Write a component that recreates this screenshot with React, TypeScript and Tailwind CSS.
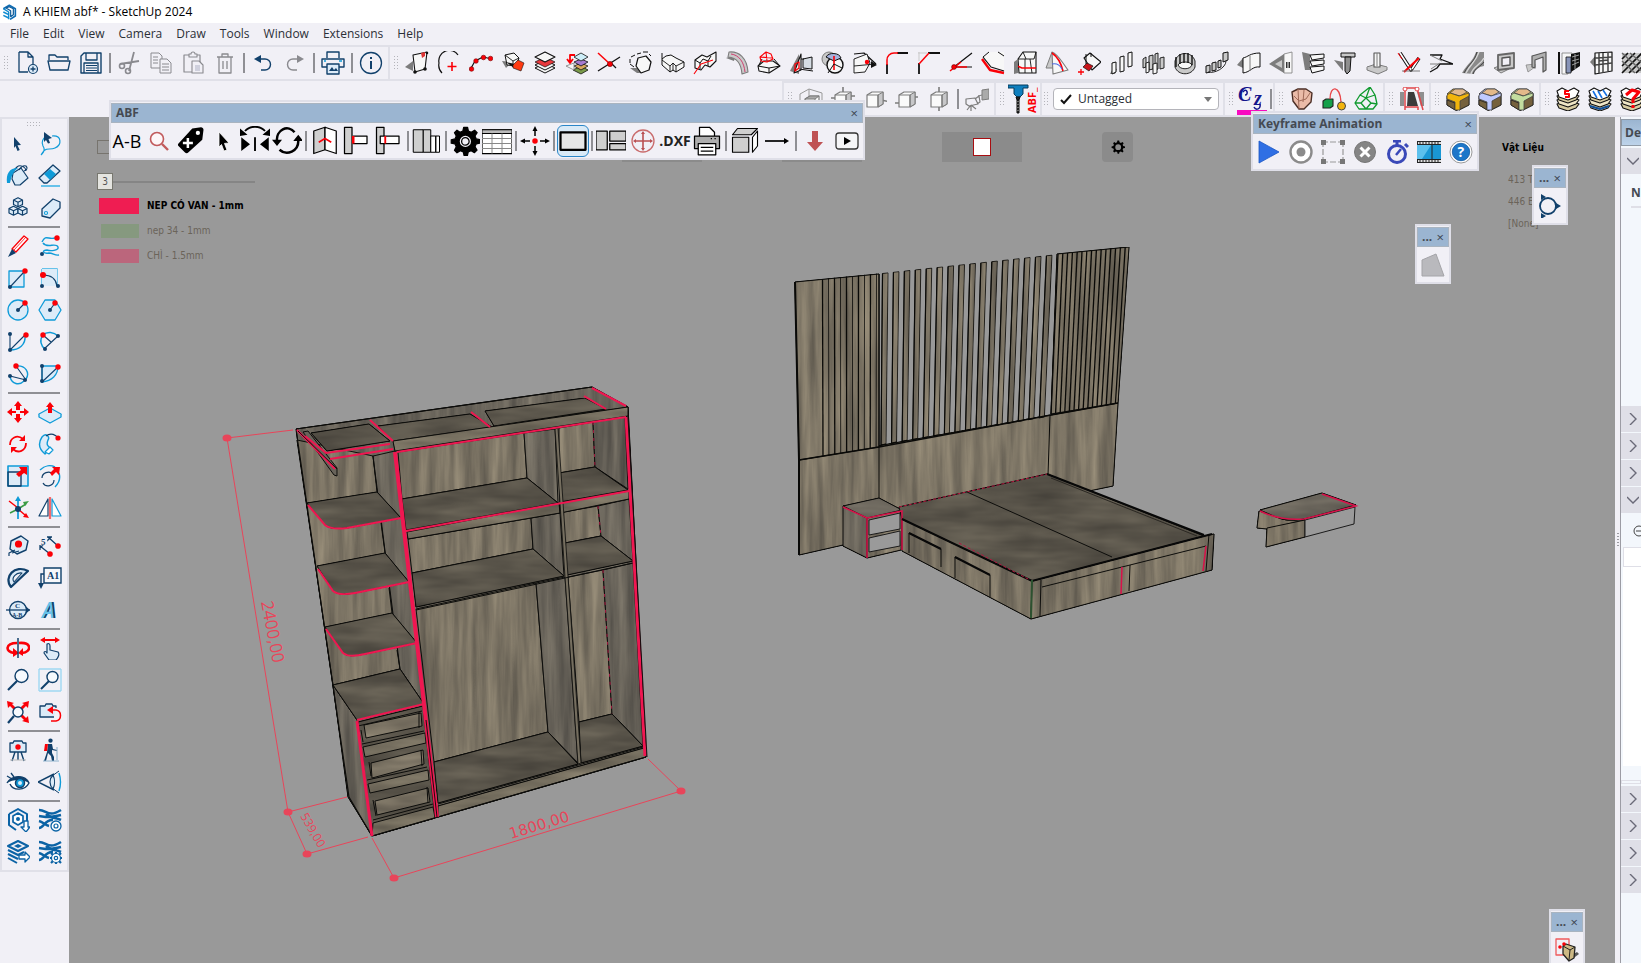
import React from 'react';
import clsx from 'clsx';

type Shape = [d: string, fill?: string, stroke?: string, width?: number];

interface Tool {
  name: string;
  shapes?: Shape[];
  node?: React.ReactNode;
  active?: boolean;
}

type Item = Tool | 'sep';

const NAVY = '#11406b';
const BLUE = '#0f9bd8';
const PALE = '#dcebf8';
const RED = '#fb0007';
const GREY = '#8a8a8f';
const BLK = '#111111';
const LITE = '#f7f7f7';
const MID = '#c9c9c9';
const DARK = '#7c7c7c';

const dot = (x: number, y: number, r: number) =>
  `M${x - r} ${y}a${r} ${r} 0 1 0 ${r * 2} 0a${r} ${r} 0 1 0 ${-r * 2} 0Z`;

const cube = (x: number, y: number, s: number) =>
  `M${x} ${y}l${s} ${-s / 2}l${s} ${s / 2}v${s}l${-s} ${s / 2}l${-s} ${-s / 2}ZM${x} ${y}l${s} ${s / 2}l${s} ${-s / 2}M${x + s} ${y + s / 2}v${s}`;

function Glyph({ shapes, size = 24 }: { shapes: Shape[]; size?: number }) {
  return (
    <svg viewBox="0 0 24 24" width={size} height={size} fill="none" aria-hidden="true" className="shrink-0">
      {shapes.map(([d, fill = 'none', stroke = 'none', width = 1], i) => (
        <path key={i} d={d} fill={fill} stroke={stroke} strokeWidth={width} strokeLinejoin="round" />
      ))}
    </svg>
  );
}

function ToolButton({ tool }: { tool: Tool }) {
  return (
    <button
      type="button"
      aria-label={tool.name}
      title={tool.name}
      className={clsx(
        'flex h-8 w-8 shrink-0 items-center justify-center rounded-md border',
        tool.active ? 'border-[#2a86c8] bg-[#d9eaf7]' : 'border-transparent',
      )}
    >
      {tool.node ?? <Glyph shapes={tool.shapes ?? []} />}
    </button>
  );
}

function Grip({ vertical = true }: { vertical?: boolean }) {
  return (
    <span
      className={clsx(
        'shrink-0 bg-[radial-gradient(circle,#b4b4ba_1px,transparent_1px)] bg-[length:3px_3px]',
        vertical ? 'h-4 w-1.5' : 'h-1.5 w-4',
      )}
    />
  );
}

function ToolRow({ items }: { items: Item[] }) {
  return (
    <>
      {items.map((item, i) =>
        item === 'sep' ? (
          <span key={i} className="mx-0.5 h-5 w-0.5 shrink-0 bg-[#8f8f94]" />
        ) : (
          <ToolButton key={i} tool={item} />
        ),
      )}
    </>
  );
}

function Group({ items, className }: { items: Item[]; className?: string }) {
  return (
    <div className={clsx('flex h-full shrink-0 items-center border-2 border-l-0 border-[#e0e0e8]', className)}>
      <span className="flex w-[11px] shrink-0 justify-center"><Grip /></span>
      <ToolRow items={items} />
    </div>
  );
}

/* ---------- standard toolbar ---------- */

const fileTools: Item[] = [
  { name: 'New', shapes: [['M4 1h9l5 5v7M4 1v20h9M13 1v5h5', 'none', NAVY, 1.3], [dot(18, 18, 4.5), PALE, NAVY, 1.2], ['M18 15.5v5M15.500 18h5', 'none', NAVY, 1.3]] },
  { name: 'Open', shapes: [['M2 9V4h6l2 2h11v3', 'none', NAVY, 1.3], ['M1 10h22l-2 9H3Z', 'none', NAVY, 1.3]] },
  { name: 'Save', shapes: [['M2 5l3-3h17v20H2Z', 'none', NAVY, 1.4], ['M7 2v7h11V2M5 22V12h14v10', 'none', NAVY, 1.3], ['M7 14.500h11M7 17h11M7 19.500h11', 'none', NAVY, 1.1]] },
  'sep',
  { name: 'Cut', shapes: [['M3 13l19-3M12 20L17 1M10 12l4 0', 'none', GREY, 1.8], [dot(5, 15, 2.5), 'none', GREY, 1.6], [dot(11, 20, 2.5), 'none', GREY, 1.6]] },
  { name: 'Copy', shapes: [['M2 2h8l3 3v12H2ZM4 6h5M4 9h5M4 12h5', 'none', GREY, 1], ['M11 8h7l4 4v10H11ZM13 13h7M13 16h7M13 19h7', '#f1f0f6', GREY, 1]] },
  { name: 'Paste', shapes: [['M3 4h16v17H3Z', 'none', GREY, 1.2], ['M8 5V3h2a2 2 0 0 1 4 0h2v3H8Z', '#f1f0f6', GREY, 1.1], ['M11 10h7l4 4v8H11Z', '#f1f0f6', GREY, 1.1], ['M14 14h5v6h-5Z', '#cfd0dd']] },
  { name: 'Delete', shapes: [['M4 6h16M9 6V3h6v3M6 6v16h12V6M10 10v8M14 10v8', 'none', GREY, 1.3]] },
  'sep',
  { name: 'Undo', shapes: [['M6 8h8a5.500 5.500 0 0 1 0 11h-4', 'none', NAVY, 1.4], ['M3 8l7-4v8Z', NAVY]] },
  { name: 'Redo', shapes: [['M18 8h-8a5.500 5.500 0 0 0 0 11h4', 'none', GREY, 1.4], ['M21 8l-7-4v8Z', GREY]] },
  'sep',
  { name: 'Print', shapes: [['M6 7V1h12v6M6 16H1V8h22v8h-5', 'none', NAVY, 1.4], ['M6 13h12v10H6Z', PALE, NAVY, 1.4], ['M8 20l3-4 2 3 2-2 2 3Z', NAVY], ['M18 10h3M3 10h2', 'none', BLUE, 1.5]] },
  'sep',
  { name: 'Model info', shapes: [[dot(12, 12, 10.5), 'none', NAVY, 1.3], ['M11 10h2v8h-2ZM11 6h2v2h-2Z', NAVY]] },
];

/* ---------- extension toolbar ---------- */

const extTools: Item[] = [
  { name: 'Extrude face', shapes: [['M0 16l8-6v10Z', DARK], ['M8 4l14-3-2 17-10 3Z', LITE, BLK, 1.1], ['M16 2l4-1v4l-3 2Z', '#d33'], [dot(10, 21, 1.8), BLK], [dot(20, 18, 1.8), BLK], [dot(22, 2, 1.3), BLK]] },
  { name: 'Arc centre', shapes: [['M5 22A11 11 0 0 1 2 12A10.500 10.500 0 0 1 21 4', 'none', BLK, 1.2], ['M15 11v9M10.500 15.500h9', 'none', RED, 1.6]] },
  { name: 'Polyline', shapes: [['M1 19L6 10l8-4 9 2', 'none', BLK, 1.2], [dot(2.5, 18, 2.3), RED, '#700', 0.6], [dot(7, 10, 2.3), RED, '#700', 0.6], [dot(14.5, 6.5, 2.3), RED, '#700', 0.6], [dot(21.5, 7.5, 2.3), RED, '#700', 0.6]] },
  { name: 'Unfold', shapes: [['M1 10l10 1-6 6Z', DARK], ['M4 4l9-2 5 5-3 8-9-1Z', LITE, BLK, 1], ['M4 4l8 6 6-3M12 10v5', 'none', BLK, 0.9], ['M5 11l9 2-1 4Z', BLK], ['M12 14l5-5 6 3-3 8-8-3Z', '#ff3a12', BLK, 0.6]] },
  { name: 'Layers', shapes: [['M2 17l10 5 10-5-10-5Z', LITE, BLK, 1], ['M2 14l10 5 10-5-10-5Z', LITE, BLK, 1], ['M2 11l10 5 10-5-10-5Z', '#e8383c', BLK, 0.7], ['M2 6l10 5 10-5-10-5Z', LITE, BLK, 1.1]] },
  { name: 'Layer swap', shapes: [['M8 19l8 4 7-4-7-4Z', '#7a9a4a', BLK, 0.8], ['M9 15l7 4 7-4-7-3Z', '#d9a85e', BLK, 0.8], ['M9 11l7 4 7-4-7-3Z', '#a57ad0', BLK, 0.8], ['M9 6l7 4 7-4-7-4Z', '#cdeef8', BLK, 0.8], ['M1 15l8-3v7Z', LITE, DARK, 0.8], ['M10 4H5v7M2 8l3 4 3-4', 'none', RED, 1.8]] },
  { name: 'Intersect', shapes: [['M1 20L23 6', 'none', BLK, 1.3], ['M14 12l5 5', 'none', BLK, 1.2], ['M1 2l12 11', 'none', RED, 1.5], [dot(13, 13, 2.6), RED, '#600', 0.6]] },
  { name: 'Offset solid', shapes: [['M1 17h12v5H8Z', DARK], ['M9 7l8-2 5 6-2 8-8 3-5-7Z', LITE, BLK, 1.2], ['M1 12V8M2 6l4-2M8 3l4-1M14 1l5 0M20 3l2 2M1 13l4 3', 'none', BLK, 1]] },
  { name: 'Extrude shape', shapes: [['M1 2v12l8 7 3-2 3 2 8-5v-5l-8-4-5-3-5 1L1 8', LITE, BLK, 1], ['M1 9l8 6 3-3 3 3 8-4M9 15v6M15 15v6M12 12v7', 'none', BLK, 0.9]] },
  { name: 'Follow path', shapes: [['M2 17V9l7-5 5 2 9-5v9l-6 6-5-2-4 5Z', LITE, BLK, 1.1], ['M2 9l5 3 3-4 5 2 3-5M7 12v6M15 10v5', 'none', BLK, 1], ['M1 23L8 13l12-4', 'none', RED, 1.1]] },
  { name: 'Pipe', shapes: [['M1 7l8 3 1-6Z', DARK], ['M4 1c10-1 18 6 19 20l-6 2C16 12 12 7 3 6Z', MID, DARK, 1.1], ['M6 3c8 1 13 8 14 18', 'none', '#d04070', 1]] },
  { name: 'Dome', shapes: [['M1 15l6-5 9 0 7 5-11 7-10-2Z', LITE, BLK, 1.1], ['M1 15l11 2 11-2M12 17v5M5 8l-3 6M17 8l5 6', 'none', BLK, 1], ['M3 6l6-5 5 2 2 5-6 3-6-1ZM9 1l1 9M3 6l12 1', 'none', RED, 1.1]] },
  { name: 'Project', shapes: [['M1 20L10 3v20Z', DARK], ['M5 22L12 3v16Z', LITE, BLK, 1.1], ['M6 13l4-2v6l-4 3Z', 'none', RED, 1.3], ['M14 8l9-2v12l-9-1Z', '#d5dce3', BLK, 1], ['M12 8h3M10 18l14 2', 'none', BLK, 1]] },
  { name: 'Loop cut', shapes: [[dot(8, 8, 7), MID, DARK, 1], [dot(14, 14, 8), LITE, BLK, 1.4], ['M5 6a8 6 0 0 1 15 1l-7 3Z', '#a7b3dd', BLK, 1], ['M13 5v14', 'none', RED, 1.6], ['M7 22l6-9 8 4', 'none', BLK, 1]] },
  { name: 'Snap to point', shapes: [['M1 3l10-1 12 11', 'none', BLK, 1.2], ['M1 8l13-5 3 9-5 9-11 1Z', LITE, BLK, 0.9], ['M1 15l21-2', 'none', BLK, 0.9], ['M18 10l6 4-6 3Z', BLK], [dot(14, 11, 2.2), RED]] },
  { name: 'Fillet', shapes: [['M12 2h11M2 13v10', 'none', BLK, 1.8], ['M2 14V9c0-4 3-7 7-7h4', 'none', RED, 1.5]] },
  { name: 'Chamfer', shapes: [['M11 2h12M2 12v11', 'none', BLK, 1.8], ['M2 13L12 2', 'none', RED, 1.5], ['M1 2h9M2 1v9', 'none', MID, 1]] },
  { name: 'Angle', shapes: [['M23 2L5 16h18', 'none', BLK, 1.2], ['M12 11l-11 9M6 16h12', 'none', RED, 1.5], [dot(5, 16, 2.4), RED, '#600', 0.6]] },
  { name: 'Bevel', shapes: [['M2 6L8 1h15v19l-13-4Z', LITE], ['M8 1L2 6M17 1l6 4', 'none', BLK, 1], ['M1 8l8 11 14 3', 'none', RED, 2.4], ['M2 6l8 10 13 4', 'none', BLK, 1.2]] },
  { name: 'Cage', shapes: [['M5 8l5-7h13v21H6Z', LITE, BLK, 1.1], ['M5 8h16l2-7M12 8v14M17 8l2 14M10 1l3 7', 'none', BLK, 0.9], ['M2 14l7 3h14', 'none', RED, 1.5], ['M1 11l4-3v14l-4 1Z', DARK]] },
  { name: 'Curviloft', shapes: [['M1 17L7 1l6 16Z', MID, DARK, 1], ['M7 1c6 2 9 9 16 18l-15 4Z', LITE, DARK, 1.1], ['M7 2c6 4 9 10 11 18', 'none', RED, 1.6], ['M7 13c5-1 8 1 10 5', 'none', '#4d6ae0', 1.2]] },
  { name: 'Drop face', shapes: [['M7 7l6-5 11 9-9 8Z', LITE, BLK, 1.1], ['M6 16l4-4 6 3-4 5Z', '#c8141a', BLK, 0.7], ['M9 3v10M14 2v4', 'none', BLK, 1], ['M1 21h6M4 18v6', 'none', RED, 1.3]] },
  { name: 'Steps copy', shapes: [['M1 23l3-6 4 1-2 5Z', DARK], ['M3 12l4-1v10l-4 2ZM11 6l4-1v15l-4 1ZM19 2l4-1v14l-4 1Z', LITE, BLK, 1]] },
  { name: 'Array grid', shapes: [['M2 8l3-2v10l-3 1ZM8 5l4-1v14l-4 1ZM14 3l3-1v16l-3 1ZM19 7l4-1v11l-4 1Z', MID, BLK, 0.9], ['M5 12l3-1v10l-3 1ZM12 13l4-1v10l-4 1Z', LITE, BLK, 0.9]] },
  { name: 'Array ring', shapes: [['M2 10c3-10 17-10 20 0v6c-3 9-17 9-20 0Z', MID, BLK, 0.9], ['M5 14c2-4 12-4 14 0-2 5-12 5-14 0Z', LITE, BLK, 0.9], ['M3 6v10M7 3v10M11 2v10M15 2v10M19 4v10', 'none', BLK, 1.4]] },
  { name: 'Array path', shapes: [['M1 15l4-1v7l-4 1ZM7 12l4-1v8l-4 1ZM13 10l3-1v7l-3 1ZM18 2l5-1v8l-5 2Z', MID, BLK, 1], ['M3 21c6 2 18-4 18-11', 'none', BLK, 0.9]] },
  { name: 'Bend sheet', shapes: [['M0 14l6-7v10Z', DARK], ['M6 7c5-1 7-5 17-5v14c-8-1-9 5-17 6Z', LITE, BLK, 1], ['M13 5v15', 'none', DARK, 1]] },
  { name: 'Window cut', shapes: [['M0 13L15 3v19Z', DARK], ['M6 13l7-4v8Z', MID], ['M15 3l8-2v21l-8 0Z', LITE, DARK, 0.8], ['M17 11h4v6h-4Z', '#333'], ['M19 11v6', 'none', LITE, 1]] },
  { name: 'Louvre', shapes: [['M1 1l8 2v16l-5 0Z', DARK], ['M9 4l14-1v4l-12 2ZM9 10l14-1v4l-12 2ZM9 16l14-1v4l-12 3Z', LITE, BLK, 1]] },
  { name: 'Bolt', shapes: [['M1 9l9 2v9Z', DARK], ['M8 2h14v4H8Z', MID, BLK, 1], ['M12 6h6l-1 14-3 3-2-3Z', '#8f8f8f', BLK, 1]] },
  { name: 'Column', shapes: [['M2 16l9-3 11 3-9 6Z', MID, DARK, 1], ['M2 16v3l11 4 9-4v-3', MID, DARK, 1], ['M9 2h6v14l-6 0Z', LITE, '#555', 1.1], ['M12 2v13', 'none', DARK, 1]] },
  { name: 'Pivot', shapes: [['M3 2l11 17L22 7', 'none', BLK, 3.6], ['M3 2l11 17M22 7l-7 11', 'none', '#fff', 1.6], ['M22 7L7 21', 'none', RED, 2], ['M5 20h18', 'none', DARK, 1], ['M1 2l4 6', 'none', RED, 1]] },
  { name: 'Stair edge', shapes: [['M1 4h12l-2 4 13 5h-13l-3 4-7 4', 'none', BLK, 1.3], ['M1 4l12 6M1 13h9M11 12L2 18', 'none', DARK, 1]] },
  { name: 'Road', shapes: [['M1 22C7 12 12 10 15 1h8v14c-6 1-9 4-10 8Z', '#8a8a8a'], ['M5 22C10 12 14 12 18 1M10 23c2-8 9-8 13-16', 'none', '#d6d6d6', 1.4], ['M3 22C8 12 13 12 16 1M12 23c2-6 7-7 11-12', 'none', '#333', 0.8]] },
  { name: 'Frame', shapes: [['M1 17l5-2 10 3-8 4Z', MID, DARK, 1], ['M5 4l16-2v15l-16 2Z', MID, '#666', 1.8], ['M9 7l8-1v8l-8 1Z', '#f1f0f6', '#555', 1.4]] },
  { name: 'Table frame', shapes: [['M1 14l9-1v3l-7 5Z', MID, DARK, 0.7], ['M7 16V5l14-4v18l-3 2V6l-8 3v8Z', '#b0b0b0', '#555', 1.2]] },
  { name: 'Door', shapes: [['M1 1h2v22H1Z', BLK], ['M5 2h10v5h-4v16H5Z', LITE, DARK, 0.8], ['M9 6h5v16H9Z', '#8995b8', BLK, 0.8], ['M14 3l9-2v14l-9 6Z', BLK], ['M15 6l7-2M15 10l7-2M15 14l7-3M18 3v15', 'none', '#aaa', 0.9]] },
  { name: 'Grille', shapes: [['M1 11l7-8v16Z', DARK], ['M6 2l17-1v19l-17 3Z', LITE, BLK, 1.2], ['M10 2v20M14 2v20M19 2v18M6 7l17-1M6 14l17-2M10 10l9-1', 'none', '#444', 1.5]] },
  { name: 'Decking', shapes: [['M1 2h22v20H1Z', MID], ['M1 8l6-6M1 15L14 2M1 22L21 2M8 22l15-15M15 22l8-8', 'none', BLK, 1.6], ['M1 2l22 20M9 2l14 12M1 10l13 12', 'none', '#666', 1.4]] },
];

/* ---------- views, tags and model extensions ---------- */

const box = (extra: string): Shape[] => [
  [extra, 'none', DARK, 1.6],
  ['M4 8l5-3h11v12l-5 3H4Z', '#fafafa', DARK, 1.2],
  ['M15 8l5-3v12l-5 3Z', '#c7c7c9', DARK, 1],
  ['M4 8h11v12', 'none', DARK, 1.2],
];

const viewTools: Item[] = [
  { name: 'Iso', shapes: [['M1 7l9-5 13 4v14M1 7v14M10 2v8', 'none', '#999', 1], ['M6 12l5-3h9v12H6Z', '#fafafa', DARK, 1.2], ['M6 12l5-3h9l-4 3Z', '#aaa', DARK, 1], ['M16 12v10', 'none', DARK, 1]] },
  { name: 'Top', shapes: box('M12 0v6M0 11h5M19 9h5') },
  { name: 'Front', shapes: box('M18 13l7 1.500') },
  { name: 'Right', shapes: box('M0 16h4M20 10h3') },
  { name: 'Back', shapes: box('M12 0v24') },
  'sep',
  { name: 'Camera', shapes: [['M1 12l9-1 3 6-9 2-3-2ZM10 12l4-3 1 6-3 2M6 18v6M6 18l-4 5M6 18l5 4', 'none', DARK, 1.2], ['M17 3l7-1v10l-7 1Z', '#aaa', DARK, 1], ['M13 9l4-1', 'none', DARK, 1]] },
];

const abfLauncher: Item[] = [
  {
    name: 'ABF tools',
    node: (
      <svg viewBox="0 0 30 32" className="h-8 w-[30px] shrink-0" aria-hidden="true">
        <path d="M0 2h20v3h-5v6l-3 3H9l-3-3V5H0Z" fill="#0f7fbe" stroke="#073d5d" />
        <path d="M8 14h4l-1 3H9ZM9 17h2v13H9Z" fill="#222" stroke="#111" />
        <path d="M8 19l4-1M8 22l4-1M8 25l4-1M8 28l4-1" stroke="#777" />
        <text transform="translate(28 30) rotate(-90)" fill={RED} fontSize="11" fontWeight="700" fontFamily="Open Sans, sans-serif">ABF_</text>
      </svg>
    ),
  },
];

const czTools: Item[] = [
  {
    name: 'Curviz',
    node: (
      <svg viewBox="0 0 32 32" className="h-8 w-8 shrink-0" aria-hidden="true">
        <text x="2" y="18" fill="#14148c" fontSize="20" fontStyle="italic" fontWeight="700" fontFamily="Liberation Serif, serif">C</text>
        <text x="18" y="22" fill="#14148c" fontSize="20" fontStyle="italic" fontWeight="700" fontFamily="Liberation Serif, serif">z</text>
        <path d="M7 9c4-5 6 3 2 3M18 24c2 4 7 2 6-3" fill="none" stroke="#14148c" strokeWidth="1.500" />
        <path d="M1 27h30v5H1Z" fill="#f80bc0" />
      </svg>
    ),
  },
  'sep',
];

const shapeTools: Item[] = [
  { name: 'Soap skin', shapes: [['M2 5l6-3 8 0 6 4-1 9-7 7-5 0-6-8Z', '#eabba8', '#4a2d24', 1.4], ['M8 2l1 20M14 3l-1 12M4 9l5 5 7-2 4-6', 'none', '#a06a58', 1]] },
  { name: 'Joint push', shapes: [['M1 14l3-2h7v7l-3 2H1Z', '#15a04a', '#222', 1.1], ['M8 12C8-2 18-2 19 15', 'none', '#e8474a', 1.3], [dot(19.5, 19, 4), '#f3b40c', '#444', 1]] },
  { name: 'Subdivide', shapes: [['M1 16L6 8 16 0l5 8 2 9-4 5-14 0ZM6 8l6 3 9-3M12 11l-5 5-6 0M7 16l5 6 5-6 6 1M17 16l-5-5 4-11', 'none', '#0f9a2e', 1.3]] },
];

const fredoTools: Item[] = [
  { name: 'Fredo scale', shapes: [['M0 5h24v14H0Z', '#8f8f8f'], ['M4 5h13l4 15H4Z', '#f1f0f6'], ['M8 5h6l4 14H7Z', '#3a3a3a'], ['M5 1h12M5 1v22M17 1l6 22M5 23v-3h13v3', 'none', '#e0454a', 1.5], [dot(5, 2, 2), '#fff', '#e0454a', 1], [dot(17, 2, 2), '#fff', '#e0454a', 1]] },
];

const roundCorner = (edge: string): Shape[] => [
  ['M1 9l10 5v10L1 18Z', '#6f5b38', '#222', 1],
  ['M1 7l6-5 10 0 6 4v12l-10 5V14Z', edge, '#444', 1],
  ['M4 6l5-4h8l4 3-7 4Z', '#e3b98a', '#444', 0.8],
  ['M13 13l10-6v11l-10 5Z', '#75613d', '#222', 0.8],
  ['M1 13l8 3v7l-8-5Z', '#75613d', '#222', 0.8],
  ['M1 8l3-2 9 3 10-3v3l-9 5v9l-5 0v-8L1 12Z', edge, '#444', 0.8],
];

const cornerTools: Item[] = [
  { name: 'Round corner', shapes: roundCorner('#f2b50c') },
  { name: 'Sharp corner', shapes: roundCorner('#bfcaff') },
  { name: 'Bevel corner', shapes: roundCorner('#c3dd9f') },
];

const stack = (tint: string): Shape[] => [
  ['M1 17l5-2 6 3 6-3 5 2-3 4-8 3-9-3Z', '#d7cba0', '#111', 1.1],
  ['M1 13l5-2 6 3 6-3 5 2-3 4-8 3-9-3Z', '#efe6c6', '#111', 1.1],
  ['M1 9l5-2 6 3 6-3 5 2-3 4-8 3-9-3Z', '#d7cba0', '#111', 1.1],
  ['M1 4l5-3 6 3 6-3 5 3-3 6-8 3-9-3Z', tint, '#111', 1.1],
];

const stackTools: Item[] = [
  { name: 'Sandbox stack', shapes: [...stack('#ffffff'), ['M13 4H9v3h4v3H9', 'none', RED, 2]] },
  { name: 'Sandbox blue', shapes: [...stack('#ffffff'), ['M5 4l4 7M10 4l4 7M15 3l4 6', 'none', '#1670e0', 1.6], ['M2 19l10 3 9-3', 'none', '#0f4f9a', 2]] },
  { name: 'Sandbox red', shapes: [...stack('#ffffff'), ['M6 8l6-5 7 2-6 7v4M13 18v3', 'none', RED, 3]] },
];

/* ---------- left tool palette ---------- */

const letter = (x: number, y: number, size: number, t: string, fill = NAVY, family = 'Liberation Serif, serif') => (
  <text x={x} y={y} fontSize={size} fontWeight="700" fill={fill} fontFamily={family}>{t}</text>
);

const annotated = (shapes: Shape[], text: React.ReactNode) => (
  <svg viewBox="0 0 24 24" className="h-6 w-6 shrink-0" fill="none" aria-hidden="true">
    {shapes.map(([d, fill = 'none', stroke = 'none', width = 1], i) => (
      <path key={i} d={d} fill={fill} stroke={stroke} strokeWidth={width} />
    ))}
    {text}
  </svg>
);

const gear = 'M12 1l2 0 .7 3 2.300 1 2.700-1.600 2 2L20 8l1 2.300 3 .7v2.600l-3 .7-1 2.300 1.600 2.700-2 2-2.700-1.600-2.300 1-.7 3h-2.600l-.7-3-2.300-1L5.600 21.400l-2-2L5 16.700 4 14.400l-3-.7V11l3-.7L5 8 3.600 5.400l2-2L8 5l2.300-1 .7-3Z';

const palette: Tool[][] = [
  [
    { name: 'Select', shapes: [['M8 5l7 8-3.500 .3 2.200 4.800-2.200 1-2-5L8 16Z', NAVY]] },
    { name: 'Lasso', shapes: [['M14 4c10-1 10 9 3 12-4 2-8 0-10 2-2 1-3 4-4 5M4 22c3-3 3-5 1-8-2-4 0-8 3-9', 'none', BLUE, 1.2], ['M6 0l8 6-3.500 1 1.500 4-2 .5L8 8l-2 2Z', NAVY]] },
    { name: 'Paint bucket', shapes: [['M7 9L15 4l7 10-8 7-5 0-3-6Z', PALE, NAVY, 1.2], ['M6 8l5-5c3-3 9 0 9 4M18 7c3-1 4-3 2-5-3-1-5 1-7 4', 'none', NAVY, 1.1], ['M1 19C0 10 3 4 12 4 8 7 6 10 4 19Z', BLUE]] },
    { name: 'Eraser', shapes: [['M1 14L15 1l7 6L9 19H6Z', PALE, NAVY, 1.3], ['M6 10l6-5 6 5-6 6Z', BLUE], ['M3 22h19', 'none', '#67c2ea', 2]] },
    { name: 'Components', shapes: [[cube(7.5, 4, 4.5), PALE, NAVY, 1.2], [cube(3, 12.5, 4.5), PALE, NAVY, 1.2], [cube(12, 12.5, 4.5), PALE, NAVY, 1.2]] },
    { name: 'Tag', shapes: [['M4 13L15 3l7 3v6L12 22l-8-2Z', PALE, NAVY, 1.3], [dot(8, 17, 1.5), '#fff', BLUE, 1.2]] },
  ],
  [
    { name: 'Line', shapes: [['M6 15L18 2l4 3L10 18Z', '#fff', RED, 1.3], ['M8 16L20 3', 'none', RED, 0.8], ['M6 15l4 4-8 4Z', NAVY]] },
    { name: 'Freehand', shapes: [['M4 8C8 0 10 6 17 4M5 9c4 6 13-1 15 4 1 4-8 4-11 3-5 0-5 4 2 3 4 0 6 3 10 2', 'none', BLUE, 1.4], [dot(4, 20, 2), NAVY], [dot(19, 4, 2.7), RED]] },
    { name: 'Rectangle', shapes: [['M3 5h15v16H3Z', PALE, BLUE, 1.3], ['M4 21L18 6', 'none', NAVY, 1.1], [dot(4, 21, 2), NAVY], [dot(19, 5, 2.7), RED]] },
    { name: 'Rotated rectangle', shapes: [['M4 3h15v17M4 3v17', 'none', '#67c2ea', 1.8], ['M4 3h15v17H4Z', PALE], ['M5 9c8 0 13 4 14 11', 'none', NAVY, 1.2], [dot(4, 20, 2), NAVY], [dot(20, 20, 2), NAVY], [dot(5, 9, 3), RED]] },
    { name: 'Circle', shapes: [[dot(12, 12, 10), PALE, BLUE, 1.3], ['M12 12l7-7', 'none', NAVY, 1.1], [dot(12, 12, 2), NAVY], [dot(19, 5, 2.7), RED]] },
    { name: 'Polygon', shapes: [['M7 2h10l6 10-6 10H7L1 12Z', PALE, BLUE, 1.3], ['M12 12l5-7', 'none', NAVY, 1.1], [dot(12, 12, 2), NAVY], [dot(17, 5, 2.7), RED]] },
    { name: 'Arc', shapes: [['M4 4v16L19 5', 'none', NAVY, 1.1], ['M19 5c1 10-6 15-15 15', 'none', BLUE, 1.4], [dot(4, 4, 2), NAVY], [dot(4, 20, 2), NAVY], [dot(20, 5, 2.7), RED]] },
    { name: 'Two point arc', shapes: [['M5 5c-4 5-2 11 2 14M5 5c4-4 11-3 15 1', 'none', BLUE, 1.4], ['M6 19L20 6M5 5l8 7', 'none', NAVY, 1.1], [dot(7, 19, 2), NAVY], [dot(20, 6, 2), NAVY], [dot(5, 5, 2.7), RED]] },
    { name: 'Three point arc', shapes: [['M10 4c10-1 14 7 10 13M4 15c2 7 9 9 14 4', 'none', BLUE, 1.4], ['M10 4l10 14L4 14', 'none', NAVY, 1.1], [dot(4, 14, 2), NAVY], [dot(19, 18, 2), NAVY], [dot(10, 4, 2.7), RED]] },
    { name: 'Pie', shapes: [['M4 4h16c0 9-6 15-16 16Z', PALE, BLUE, 1.3], ['M4 4v16L20 5', 'none', NAVY, 1.1], [dot(4, 4, 2), NAVY], [dot(4, 19, 2), NAVY], [dot(20, 5, 2.7), RED]] },
  ],
  [
    { name: 'Move', shapes: [['M12 1l4 5h-2v4h-4V6H8ZM12 23l4-5h-2v-4h-4v4H8ZM1 12l5-4v3h4v2H6v3ZM23 12l-5-4v3h-4v2h4v3Z', RED]] },
    { name: 'Push pull', shapes: [['M1 14l11-6 11 6-11 6Z', PALE, BLUE, 1.3], ['M1 14v3l11 6 11-6v-3', PALE, BLUE, 1.3], ['M12 2l4 5h-2v6h-4V7H8Z', RED]] },
    { name: 'Rotate', shapes: [['M4 13c0-7 7-11 13-6M20 11c0 8-8 11-13 6', 'none', RED, 1.8], ['M19 3v6h-6ZM5 21v-6h6Z', RED]] },
    { name: 'Follow me', shapes: [['M4 5c4-5 8 0 6 3-2 5 0 6 2 8l-5 6C1 17 0 11 4 5Z', PALE, BLUE, 1.4], ['M8 4c5-4 10-1 12 2', 'none', NAVY, 1.2], [dot(20, 6, 2.6), RED], ['M7 20l5-5 3 3-4 4Z', '#fff', BLUE, 1.2]] },
    { name: 'Scale', shapes: [['M2 2h20v20H2Z', PALE, BLUE, 1.6], ['M2 8h13v14H2Z', 'none', NAVY, 1.4], ['M21 3v8l-3-2-5 4-3-3 5-4-2-3Z', RED]] },
    { name: 'Offset', shapes: [['M2 6c5-5 11-5 15-3M21 9c2 6 0 10-4 14', 'none', BLUE, 1.4], ['M4 14c0-5 7-8 11-4M16 16c0 6-8 8-11 3', 'none', NAVY, 1.2], ['M22 3l-1 8-3-3-4 4-2-3 4-4-2-2Z', RED]] },
    { name: 'Axes', shapes: [['M12 12V3M12 14v9', 'none', BLUE, 1.7], ['M12 0l3 5H9Z', BLUE], ['M12 13l8-5M12 13l-8 4', 'none', '#3a9c45', 1.5], ['M23 5l-6 1 2 4Z', '#3a9c45'], ['M12 13l7 6M12 12L3 5', 'none', RED, 1.5], ['M23 22l-6-1 3-4Z', RED], [dot(12, 13, 3), NAVY]] },
    { name: 'Flip', shapes: [['M10 3v17H1Z', '#fff', NAVY, 1.2], ['M14 3v17h9Z', '#fff', BLUE, 1.2], ['M12 1v22', 'none', '#f5696b', 2.2]] },
  ],
  [
    { name: 'Tape measure', shapes: [['M5 7l10-5 7 5-2 9-9 4-7-5Z', PALE, NAVY, 1.4], ['M3 22v-3l6-3M6 19l7-2', 'none', NAVY, 1.2], [dot(12.5, 10, 3.6), RED]] },
    { name: 'Dimension', node: annotated([['M2 14L13 3M10 3l10 9M2 12l10 8M9 3h5M2 11v5', 'none', NAVY, 1.3], [dot(20, 12, 2.8), RED], [dot(12, 20, 2.8), RED], [dot(6, 8, 3.5), '#f1f0f6']], letter(3, 11, 9, '5')) },
    { name: 'Protractor', shapes: [['M5 21C-3 11 9-2 22 5Z', PALE, NAVY, 2.2], ['M8 16c-3-4 2-10 8-9Z', '#f1f0f6', NAVY, 1.1]] },
    { name: 'Text', node: annotated([['M6 2h17v15H6Z', '#f7f8fb', NAVY, 1.4], ['M6 8H3v13', 'none', NAVY, 1.4], ['M0 17h6l-3 6Z', NAVY]], letter(9, 13, 10, 'A1')) },
    { name: 'Section', node: annotated([[dot(12, 12, 8.5), PALE, NAVY, 1.3], ['M0 12h24', 'none', NAVY, 1.3], ['M15 4l9 8-9 8c7-5 7-11 0-16Z', NAVY]], <>{letter(9, 10, 7, 'C')}{letter(6, 19, 6, 'A-B')}</>) },
    {
      name: '3D text',
      node: (
        <svg viewBox="0 0 30 30" className="h-[30px] w-[30px] shrink-0" aria-hidden="true">
          <text x="9" y="23" fontSize="21" fontStyle="italic" fontWeight="600" fill={NAVY} fontFamily="Open Sans, sans-serif">A</text>
          <text x="7" y="23" fontSize="21" fontStyle="italic" fontWeight="600" fill="#67c2ea" fontFamily="Open Sans, sans-serif">A</text>
        </svg>
      ),
    },
  ],
  [
    { name: 'Orbit', shapes: [['M11 7C-1 7-1 16 8 17M13 7c13-1 13 9 3 10', 'none', RED, 2.6], ['M7 12l6 5-6 4ZM17 12l-5 5 5 3Z', RED], ['M12 2v20', 'none', NAVY, 1.5]] },
    { name: 'Pan', shapes: [['M2 4l5-3v2h10V1l5 3-5 3V5H7v2Z', RED], ['M9 8c2-1 3 0 3 2v4l8 2c2 2 0 6-2 8h-7l-5-7c0-2 2-2 3 0Z', PALE, NAVY, 1.2]] },
    { name: 'Zoom', shapes: [[dot(15.5, 8, 6.5), '#f6f9fd', NAVY, 1.4], ['M11 13L2 22', 'none', NAVY, 2.2]] },
    { name: 'Zoom window', shapes: [['M1 1h22M1 23h22M1 1v22M23 1v22', 'none', '#9fd8f2', 1.4], [dot(14.500, 9, 5.5), '#f6f9fd', NAVY, 1.4], ['M11 13l-8 8', 'none', NAVY, 2]] },
    { name: 'Zoom extents', shapes: [['M1 1l7 2-2 1 4 4-2 2-4-4-2 2ZM23 1l-7 2 2 1-4 4 2 2 4-4 2 2ZM23 23l-7-2 2-1-4-4 2-2 4 4 2-2Z', RED], [dot(12, 12, 5), '#f6f9fd', NAVY, 1.4], ['M8 16l-6 7', 'none', NAVY, 2.2]] },
    { name: 'Previous', shapes: [['M18 8V6h-3l-1-2H8L7 6H2v11h14', PALE, NAVY, 1.3], ['M13 10h5c6 1 6 10 0 11h-5', 'none', RED, 1.5], ['M9 10l6-4v8Z', RED]] },
  ],
  [
    { name: 'Position camera', shapes: [['M4 5h3l1-2h8l1 2h3v9H4Z', PALE, NAVY, 1.3], [dot(12, 9, 2.7), RED], ['M9 14L6 23M15 14l3 9M12 14v8', 'none', NAVY, 1.4], ['M4 22h16', 'none', '#bbb', 1]] },
    { name: 'Walk', shapes: [[dot(12.5, 2.6, 2.2), NAVY], ['M10 6h4l1 5 4 1v1l-5-1v3l2 4 0 4h-2l-1-5-3-3-2 8H6l3-9Z', NAVY], ['M7 6h3l-1 7H6Z', RED], ['M19 9v13M5 23h16', 'none', '#8fb4cd', 1.1]] },
    { name: 'Look around', shapes: [['M1 13C6 5 19 4 23 13c-4 8-16 8-19 1', '#fff', NAVY, 1.4], ['M1 13C6 5 19 4 23 13c-6-4-16-4-22 0Z', NAVY], [dot(14, 13, 4.5), BLUE, NAVY, 1.5], [dot(14, 13, 2), PALE], ['M6 9L1 6M8 7L5 3', 'none', NAVY, 1.3]] },
    { name: 'Field of view', shapes: [['M16 4L0 12l16 8', 'none', NAVY, 1.4], ['M15 5c-4 4-4 10 0 14 2-4 2-10 0-14Z', PALE, NAVY, 1.2], ['M21 3c2 6 2 12 0 18', 'none', BLUE, 1.4], ['M14 6l7-5M14 18l7 5', 'none', NAVY, 1]] },
  ],
  [
    { name: 'Warehouse', shapes: [['M3 6l9-5 9 5v8M3 6v11l7 5', 'none', '#0b63a5', 2], ['M7 8l5-3 5 3v6l-5 3-5-3Z', '#fff', '#0b63a5', 1.7], [dot(12, 11, 2), '#0b63a5'], ['M18 13h4v6h2l-4 5-5-5h3Z', '#fff', '#0b63a5', 1.3]] },
    { name: 'Extension warehouse', shapes: [['M1 2c8 0 9 8 22 0M1 8c8 1 9 2 22-1M1 20c5 0 6-9 14-8M1 13c4 1 6 4 10 5M8 6c5 5 9 3 15 6', 'none', '#0b63a5', 2.6], [dot(18, 18, 5), '#fff', '#0b63a5', 1.3], [dot(18, 18, 2), 'none', '#0b63a5', 1.2]] },
    { name: 'Send to layout', shapes: [['M2 6l10-5 10 5-10 5ZM2 10l10 5 6-3M2 14l10 5M2 18l9 5', 'none', '#0b63a5', 2], ['M8 6l4-2 4 2-4 2Z', '#0b63a5'], ['M13 15h6v-3l5 5-5 5v-3h-6Z', '#fff', '#0b63a5', 1.3]] },
    { name: 'Extension manager', shapes: [['M1 2c8 0 9 8 22 0M1 8c8 1 9 2 22-1M1 20c5 0 6-9 14-8M1 13c4 1 6 4 10 5M8 6c5 5 9 3 15 6', 'none', '#0b63a5', 2.6], ['M18 12v12M12 18h12M13 13l10 10M23 13L13 23', 'none', '#0b63a5', 2.2], [dot(18, 18, 4.5), '#fff', '#0b63a5', 1.2], [dot(18, 18, 1.7), 'none', '#0b63a5', 1.2]] },
  ],
];

/* ---------- floating toolbars ---------- */

const BigGlyph = ({ shapes }: { shapes: Shape[] }) => <Glyph shapes={shapes} size={30} />;

const abfTools: Item[] = [
  { name: 'Label', node: <span className="whitespace-nowrap font-['Open_Sans',sans-serif] text-[18px] leading-6 text-black">A-B</span> },
  { name: 'Find', shapes: [[dot(10, 10, 6.5), '#fdf6f8', '#c15a5c', 1.6], ['M15 15l6 6', 'none', '#c15a5c', 2.4]] },
  { name: 'Add tag', node: <BigGlyph shapes={[['M2 14L13 2l7-1c1 0 2 1 2 2l-1 8L10 21c-1 1-2 1-3 0l-5-5c-.6-.6-.6-1.400 0-2Z', '#000'], [dot(17.5, 5.5, 1.7), '#fff'], ['M9.500 9.500v8M5.500 13.500h8', 'none', '#fff', 2]]} /> },
  { name: 'Pick', shapes: [['M8 3l10 11-4.500.4L16 21l-3 1-2.500-6.500L8 18Z', '#000', '#fff', 0.8]] },
  { name: 'Mirror', node: <BigGlyph shapes={[['M4 4C8-.5 16-.5 20 4M12 9v11', 'none', '#000', 1.5], ['M0 2v6l6-1ZM24 2v6l-6-1ZM1 9v11l7-5.500ZM23 9v11l-7-5.500Z', '#000']]} /> },
  { name: 'Rotate', node: <BigGlyph shapes={[['M4 12a8 9 0 0 1 14-7M21 12a9 9 0 0 1-15 7', 'none', '#000', 2], ['M0 11h8l-4 5ZM17 12h8l-4-5Z', '#000']]} /> },
  'sep',
  { name: 'Fold', node: <BigGlyph shapes={[['M3 4l9-3v18l-9 3Z', '#cfcfcf', '#000', 1], ['M12 1l9 3v18l-9-3Z', '#fff', '#000', 1], ['M7 13l5-3 5 3', 'none', RED, 1.300]]} /> },
  { name: 'Edge join', node: <BigGlyph shapes={[['M2 1h6v21H2Z', '#cfcfcf', '#000', 1], ['M9 8h11v6H9Z', '#fff', '#000', 1], ['M9 8v6', 'none', RED, 2]]} /> },
  { name: 'Inset join', node: <BigGlyph shapes={[['M2 1h6v21H2Z', '#cfcfcf', '#000', 1], ['M5 8h15v6H5Z', '#fff', '#000', 1], ['M9 8v6', 'none', RED, 1.500]]} /> },
  'sep',
  { name: 'Boards', node: <BigGlyph shapes={[['M1 3h8v18H1Z', '#cfcfcf', '#000', 0.8], ['M9 3h6v18H9Z', '#cfcfcf', '#000', 0.8], ['M15 8h4v13h-4ZM19 8h3v13h-3Z', '#fff', '#000', 0.8]]} /> },
  'sep',
  { name: 'Settings', node: <BigGlyph shapes={[[gear, '#000', '#000', 1], [dot(12.3, 12.3, 4.5), '#f1f0f6'], [dot(12.3, 12.3, 3), 'none', '#000', 1]]} /> },
  { name: 'Table', node: <BigGlyph shapes={[['M0 3h24v19H0Z', '#fff', '#000', 1], ['M0 3h24v3H0Z', '#bbb', '#000', 0.8], ['M0 10h24M0 14h24M0 18h24M8 6v16M16 6v16', 'none', '#888', 0.8]]} /> },
  'sep',
  { name: 'Explode', node: <BigGlyph shapes={[['M12 2v6M12 16v6M2 12h6M16 12h6', 'none', '#000', 1.200], ['M12 0l2 4h-4ZM12 24l2-4h-4ZM0 12l4-2v4ZM24 12l-4-2v4Z', '#000'], [dot(12, 12, 2.2), RED]]} /> },
  'sep',
  { name: 'Sheet', active: true, node: <BigGlyph shapes={[['M2 5h20v14H2Z', '#e6e6e6', '#000', 1.800]]} /> },
  'sep',
  { name: 'Nesting', node: <BigGlyph shapes={[['M0 4h9v15H0ZM11 4h13v8H11ZM11 14h13v5H11Z', '#cfcfcf', '#000', 1]]} /> },
  { name: 'Centre', shapes: [[dot(12, 12, 11), 'none', '#c96b6c', 1.3], ['M12 4v16M4 12h16', 'none', '#b95052', 1.6], ['M12 2l2 3h-4ZM12 22l2-3h-4ZM2 12l3-2v4ZM22 12l-3-2v4Z', '#b95052']] },
  { name: 'Export DXF', node: <span className="whitespace-nowrap font-['Open_Sans',sans-serif] text-sm font-bold text-[#222]">.DXF</span> },
  { name: 'Print', node: <BigGlyph shapes={[['M6 9V1h8l4 4v4', '#fff', '#000', 1], ['M2 8h20v10H2Z', '#aeaeae', '#000', 1], ['M5 14h14v9H5Z', '#fff', '#000', 1], ['M7 17h10M7 20h10M15 10h1M18 10h1', 'none', '#000', 1]]} /> },
  'sep',
  { name: 'Box', node: <BigGlyph shapes={[['M2 9h13v12H2Z', '#cfcfcf', '#000', 0.9], ['M2 7l4-5h16l-5 5Z', '#cfcfcf', '#000', 0.9], ['M18 9l4-5v12l-4 5Z', '#fff', '#000', 0.9]]} /> },
  { name: 'Direction', shapes: [['M0 12h20', 'none', '#000', 1.7], ['M24 12l-5-3v6Z', '#000']] },
  'sep',
  { name: 'Down', shapes: [['M9 2h6v11h5l-8 9-8-9h5Z', '#bf5254']] },
  { name: 'Play', shapes: [['M4 4h16c2 0 3 1 3 3v10c0 2-1 3-3 3H4c-2 0-3-1-3-3V7c0-2 1-3 3-3Z', '#f5f5f7', '#333', 1.3], ['M9 8l7 4-7 4Z', '#000']] },
];

const keyframeTools: Item[] = [
  { name: 'Play', shapes: [['M2 1l20 11L2 23Z', '#2f6fe4', '#1b57c4', 0.8]] },
  { name: 'Record', shapes: [[dot(12, 12, 10.5), '#fff', '#8b8b8b', 2.4], [dot(12, 12, 4.5), '#8b8b8b']] },
  { name: 'Select keys', shapes: [['M2 2h20v20H2Z', 'none', '#999', 1.2], ['M0 0h5v5H0ZM19 0h5v5h-5ZM0 19h5v5H0ZM19 19h5v5h-5Z', '#777'], ['M7 2h2M15 2h2M7 22h2M15 22h2M2 7v2M2 15v2M22 7v2M22 15v2', 'none', '#f1f0f6', 2]] },
  { name: 'Cancel', shapes: [[dot(12, 12, 10.5), '#858585', '#777', 1], ['M7.500 7.500l9 9M16.500 7.500l-9 9', 'none', '#fff', 3]] },
  { name: 'Timer', shapes: [[dot(12, 14, 8.5), '#f1f0f6', '#3a49b8', 3], ['M8 1h8M12 2v4M20 4l3 3', 'none', '#3a49b8', 3], ['M11 15l5-6', 'none', '#3a49b8', 2.500]] },
  { name: 'Film', shapes: [['M0 1h24v22H0Z', '#222'], ['M0 5h24v14H0Z', '#1a97d4'], ['M0 5h14L5 19H0Z', '#5cc0ec'], ['M1 3h23M1 21h23', 'none', '#ddd', 2], ['M3 2v3M6 2v3M9 2v3M12 2v3M15 2v3M18 2v3M21 2v3M3 20v3M6 20v3M9 20v3M12 20v3M15 20v3M18 20v3M21 20v3M15 5v14', 'none', '#222', 1]] },
  { name: 'Help', node: annotated([[dot(12, 12, 11), '#fff', '#999', 1], [dot(12, 12, 8.7), '#1d77c9', '#0f5aa5', 0.8]], letter(8.5, 17, 14, '?', '#fff', 'Open Sans, sans-serif')) },
];

interface FloatingProps {
  title: string;
  place: string;
  items: Item[];
}

function Floating({ title, place, items }: FloatingProps) {
  return (
    <section className={clsx('absolute border-2 border-[#dfdfe8] bg-[#f1f0f6] pt-px', place)}>
      <header className="flex h-5 items-center justify-between border border-[#a9b4c0] bg-[#9bb5d1] px-1">
        <h2 className="text-[12px] font-bold leading-4 text-[#454a52]">{title}</h2>
        <button type="button" aria-label="Close" className="text-[13px] leading-4 text-[#3c4450]">×</button>
      </header>
      <div className="flex h-[35px] items-center">
        <ToolRow items={items} />
      </div>
    </section>
  );
}

/* ---------- model ---------- */

const BACK = '#7b7364';
const SIDE = '#68635a';
const FRONT = '#756e5f';
const DECK = '#59544a';
const PINK = '#ef1751';

const uprights: [string, string][] = [
  // wall panel
  ['799,460 1118,403 1113,486 900,530 843,545 799,555', BACK],
  ['795,282 879,274 879,447 799,460', BACK],
  ['1057,254 1129,247 1118,403 1051,414', BACK],
  // wardrobe shell
  ['296,429 592,387 628,407 646,757 372,836 349,797', SIDE],
  ['297,440 373,456 400,669 333,685', BACK],
  ['373,456 395,451 424,704 400,669', SIDE],
  // upper bay
  ['398,452 524,433 527,478 402,499', BACK],
  ['524,433 555,429 558,503 527,478', SIDE],
  ['559,428 593,422 595,467 559,473', BACK],
  ['593,422 625,417 628,489 595,467', SIDE],
  // middle bay
  ['408,539 531,518 533,549 412,573', BACK],
  ['531,518 560,513 564,576 533,549', SIDE],
  ['563,512 598,506 601,536 565,543', BACK],
  ['598,506 629,499 633,561 601,536', SIDE],
  // tall bay
  ['416,609 536,583 548,732 434,762', BACK],
  ['536,583 565,577 578,763 548,732', SIDE],
  ['568,577 603,570 612,714 579,722', BACK],
  ['603,570 633,563 643,746 612,714', SIDE],
  ['333,685 357,720 372,836 348,797', SIDE],
  // nightstand and bed sides
  ['843,506 867,518 867,558 843,546', SIDE],
  ['867,518 902,510 901,550 867,558', BACK],
  ['902,519 1032,581 1031,619 902,551', BACK],
  ['1032,581 1204,536 1214,534 1212,570 1031,619', BACK],
  // floating shelf
  ['1259,511 1286,520 1305,520 1267,529 1257,528', BACK],
  ['1267,528 1305,520 1305,537 1266,547', BACK],
];

const decks: [string, string][] = [
  ['M307 503L377 492L401 518L347 528Q330 530 325 525Z', DECK],
  ['M317 566L385 553L409 582L355 593Q338 596 333 591Z', DECK],
  ['M325 627L392 613L417 643L365 654Q348 658 343 653Z', DECK],
  ['M333 685L400 669L424 704L357 720Z', DECK],
  ['M402 499L527 478L558 503L406 530Z', DECK],
  ['M559 473L595 467L628 490L560 502Z', DECK],
  ['M412 573L533 549L564 576L416 607Z', DECK],
  ['M565 543L601 536L633 561L567 575Z', DECK],
  ['M434 762L548 732L578 764L438 803Z', DECK],
  ['M579 722L612 714L643 746L581 763Z', DECK],
  ['M311 433L369 424L390 441L327 451Z', DECK],
  ['M378 426L470 414L492 427L393 441Z', DECK],
  ['M485 411L585 398L606 409L494 426Z', DECK],
  ['M407 532L559 503L560 513L408 539Z', FRONT],
  ['M560 503L629 491L629 499L560 513Z', FRONT],
  ['M393 441L628 407L628 416L395 451Z', FRONT],
  ['M438 806L644 748L646 757L438 817Z', FRONT],
  ['M358 722L423 706L435 818L372 836Z', DECK],
  ['M364 725L421 713L422 726L366 738Z', BACK],
  ['M363 747L425 733L426 743L365 757Z', FRONT],
  ['M371 763L423 750L424 764L372 778Z', BACK],
  ['M368 784L428 770L429 780L370 793Z', FRONT],
  ['M375 801L428 788L430 802L377 815Z', BACK],
  ['M373 823L433 807L435 818L372 836Z', FRONT],
  ['M843 506L879 498L902 510L867 518Z', SIDE],
  ['M899 507L1047 474L1204 536L1032 581L902 519Z', DECK],
  ['M1260 510L1322 493L1356 505L1304 519Q1286 522 1276 517Z', SIDE],
];

const slats = Array.from({ length: 16 }, (_, i) => {
  const top = 882.5 + i * 10.93;
  const bottom = 881 + i * 10.56;
  const y1 = 273.500 - i * 1.18;
  const y2 = 445 - i * 1.82;
  return `${top},${y1} ${top + 5.5},${y1 - 0.6} ${bottom + 5},${y2 - 1} ${bottom},${y2}`;
});

const edging = [
  'M401 518L347 528Q331 530 325 525L308 505',
  'M409 582L355 593Q339 596 333 591L318 569',
  'M417 643L365 654Q349 658 343 653L326 629',
  'M424 704L357 720',
  'M297 430L335 469',
  'M305 436L326 453L390 444',
  'M330 459L393 449',
  'M370 420L393 441',
  'M471 412L490 427',
  'M584 396L606 409',
  'M592 388L626 406',
  'M397 452L626 417',
  'M406 531L629 491',
];

function Model() {
  return (
    <svg
      viewBox="69 117 1546 846"
      preserveAspectRatio="xMinYMin slice"
      className="absolute inset-0 h-full w-full"
      role="img"
      aria-label="Bedroom furniture model"
    >
      <defs>
        <filter id="grain" x="0" y="0" width="100%" height="100%" colorInterpolationFilters="sRGB">
          <feTurbulence type="fractalNoise" baseFrequency="0.110 0.008" numOctaves="4" seed="7" />
          <feColorMatrix values="1.200 0 0 0 -0.100  1.180 0 0 0 -0.090  1.100 0 0 0 -0.060  0 0 0 0 1" result="n" />
          <feComposite in="SourceGraphic" in2="n" operator="arithmetic" k1="0.550" k2="0.730" />
        </filter>
        <filter id="grainFlat" x="0" y="0" width="100%" height="100%" colorInterpolationFilters="sRGB">
          <feTurbulence type="fractalNoise" baseFrequency="0.014 0.070" numOctaves="3" seed="3" />
          <feColorMatrix values="1.200 0 0 0 -0.100  1.200 0 0 0 -0.100  1.150 0 0 0 -0.080  0 0 0 0 1" result="n" />
          <feComposite in="SourceGraphic" in2="n" operator="arithmetic" k1="0.500" k2="0.750" />
        </filter>
      </defs>

      <g filter="url(#grain)" stroke="#0d0d0b" strokeWidth="1">
        {uprights.map(([points, fill]) => <polygon key={points} points={points} fill={fill} />)}
        {slats.map((points) => <polygon key={points} points={points} fill={BACK} strokeWidth="0.600" />)}
      </g>

      {/* wall panel joints */}
      <g stroke="#090907" fill="none">
        {Array.from({ length: 10 }, (_, i) => (
          <path key={i} d={`M${822.5 + i * 6} ${279 - i * 0.6}L${823 + i * 5.9} ${456 - i}`} strokeWidth={i % 2 ? 0.8 : 1.3} />
        ))}
        {Array.from({ length: 15 }, (_, i) => (
          <path key={i} d={`M${1058 + i * 4.8} ${254 - i * 0.5}L${1051 + i * 4.6} ${414 - i * 0.75}`} strokeWidth="1.300" />
        ))}
        {slats.map((points) => {
          const [start, , right, left] = points.split(' ');
          return <path key={points} d={`M${start}L${left}L${right}`} strokeWidth="1.200" />;
        })}
        <path d="M799 460L879 447L1051 415L1118 403" strokeWidth="1.500" />
        <path d="M795 282L799 460V555" strokeWidth="2" />
        <path d="M879 447V498M1050 415L1048 475M879 274V447" />
      </g>

      <g filter="url(#grainFlat)" stroke="#0d0d0b" strokeWidth="1">
        {decks.map(([d, fill]) => <path key={d} d={d} fill={fill} />)}
      </g>

      {/* wardrobe dividers, carcass outline */}
      <path d="M555 429L558 428L568 576L581 763L578 764L565 577Z" fill={FRONT} stroke="#0d0d0b" strokeWidth="0.800" />
      <g stroke="#0d0d0b" fill="none">
        <path d="M296 429L592 387L628 407M296 429L349 797L372 836L646 757" strokeWidth="1.200" />
        <path d="M377 492L373 456M385 553L381 523M392 613L389 588M400 669L397 650M416 610L565 578L633 563" />
        <path d="M438 804L643 747M358 726L422 711M362 744L424 731M367 780L427 767M373 820L433 804" />
        <path d="M361 730L363 742M369 762L371 776M373 800L376 816M419 712V728M421 750L422 766M427 787L428 803" />
      </g>
      <path d="M303 432L308 431L337 468V476L334 475Z" fill={SIDE} stroke="#0d0d0b" />

      {/* edge banding */}
      <g stroke={PINK} strokeWidth="2" fill="none">
        {edging.map((d) => <path key={d} d={d} />)}
        <path d="M395 452L437 817" strokeWidth="4" />
        <path d="M626 417L645 756" strokeWidth="3" />
        <path d="M357 721L372 836" strokeWidth="3" />
      </g>
      <path d="M426 720L437 817M628 417L647 757M298 431L337 469" stroke="#1a0a0d" fill="none" />
      <path d="M593 422L595 467M598 506L601 536M603 570L612 714" stroke="#a3173f" strokeDasharray="3 5" />

      {/* nightstand, bed and floating shelf details */}
      <path d="M869 520L900 513V529L869 535ZM869 538L900 531V546L869 552ZM1305 520L1355 507L1354 524L1305 537Z" fill="#9a9a9a" stroke="#1b1b1b" />
      <path d="M843 507L867 518L902 511V550M867 518V558" stroke="#d9114a" strokeWidth="1.500" fill="none" />
      <path d="M967 492L1112 557M909 533L941 549V567M909 533V553M955 557L990 575V597M955 557V578M1042 587L1206 546M1041 580L1040 616M1130 565L1129 591M1209 534L1206 571" stroke="#0d0d0b" fill="none" />
      <path d="M902 519L1032 581L1212 534M1047 474L1204 535M909 533L941 549M955 557L990 575" stroke="#080808" strokeWidth="2" fill="none" />
      <path d="M1051 478L1197 536" stroke="#2a2722" />
      <path d="M899 507L1047 474M959 543L1030 580" stroke="#b5163f" strokeDasharray="3 2" />
      <path d="M1122 567L1121 594M1206 546L1203 571M1260 511Q1280 521 1304 519L1356 506L1322 494" stroke="#d9114a" strokeWidth="1.500" fill="none" />
      <path d="M1032 580L1031 618" stroke="#2c5230" strokeWidth="2" />

      {/* dimensions */}
      <g stroke="#e8455a" fill="none">
        <path d="M293 430L227 438L288 812L347 797M288 812L307 854L368 837M372 838L394 878L681 791L648 759" />
      </g>
      <g fill="#e8455a">
        {[[227, 438], [288, 812], [307, 854], [394, 878], [681, 791]].map(([x, y]) => (
          <ellipse key={x} cx={x} cy={y} rx="4.500" ry="3.500" />
        ))}
        <g fontFamily="Open Sans, sans-serif">
          <text transform="translate(261 602) rotate(79)" fontSize="17">2400,00</text>
          <text transform="translate(300 816) rotate(60)" fontSize="12">539,00</text>
        </g>
        <text transform="translate(511 839) rotate(-17)" fontSize="15" fontFamily="DejaVu Sans, sans-serif">1800,00</text>
      </g>
    </svg>
  );
}

const materials = [
  { label: 'NEP CÓ VAN - 1mm', swatch: 'h-4 w-10 bg-[#ef1d52]', text: 'font-bold text-black' },
  { label: 'nep 34 - 1mm', swatch: 'h-3.5 w-[38px] bg-[#86997f]', text: 'text-[#6b6459]' },
  { label: 'CHÌ - 1.5mm', swatch: 'h-3.5 w-[38px] bg-[#bb667c]', text: 'text-[#6b6459]' },
];

function Viewport() {
  return (
    <main className="relative min-w-0 flex-1 overflow-hidden bg-[#999999] font-['DejaVu_Sans_Condensed','DejaVu_Sans',sans-serif] text-[10px]">
      <Model />
      <div className="relative flex justify-between pt-[15px]">
        <div className="w-[186px] pl-7">
          <div className="mt-2 h-3.5 w-10 border border-[#77746e]" />
          <div className="mt-[19px] flex items-center">
            <span className="flex h-[17px] w-4 items-center justify-center border border-[#77776f] bg-[#e4e4e0] text-[#555]">3</span>
            <span className="h-0.5 flex-1 bg-[#858585]" />
          </div>
          <ul className="mt-[3px]">
            {materials.map((m) => (
              <li key={m.label} className="flex h-[25px] items-center gap-2 whitespace-nowrap">
                <span className="flex w-[42px] shrink-0 justify-end"><span className={m.swatch} /></span>
                <span className={m.text}>{m.label}</span>
              </li>
            ))}
          </ul>
        </div>

        <div className="flex flex-1 gap-20 pl-[367px]">
          <button type="button" aria-label="Preset one" className="h-[30px] w-20 bg-[#8b8b8b]" />
          <button type="button" aria-label="Preset two" className="h-[30px] w-20 bg-[#8b8b8b]" />
          <button type="button" aria-label="Preset three" className="flex h-[30px] w-20 items-center justify-center bg-[#8b8b8b]">
            <span className="h-[18px] w-[18px] border border-[#a80d10] bg-white" />
          </button>
          <button type="button" aria-label="Options" className="flex h-[30px] w-[31px] items-center justify-center rounded-sm bg-[#8b8b8b]">
            <Glyph size={14} shapes={[[gear, '#000'], [dot(12.3, 12.3, 5), '#8b8b8b']]} />
          </button>
        </div>

        <div className="w-[113px] text-[#6b6459]">
          <h3 className="mt-2 font-bold text-black">Vật Liệu</h3>
          <ul className="mt-[17px] pl-1.5">
            <li className="h-[22px]">413 T</li>
            <li className="h-[22px]">446 E</li>
            <li className="h-[22px]">[None]</li>
          </ul>
        </div>
      </div>
    </main>
  );
}

function TrayRow({ open = false }: { open?: boolean }) {
  return (
    <button
      type="button"
      aria-label={open ? 'Collapse panel' : 'Expand panel'}
      className="mb-px flex h-[26px] w-full items-center justify-start bg-[#dfdfe7] pl-1.5"
    >
      <svg viewBox="0 0 12 12" className="h-3 w-3 shrink-0" fill="none" stroke="#6a6a78" strokeWidth="1.400" aria-hidden="true">
        <path d={open ? 'M0 3l6 6 6-6' : 'M3 0l6 6-6 6'} />
      </svg>
    </button>
  );
}

function Tray() {
  return (
    <aside className="flex w-[26px] shrink-0 overflow-hidden bg-[#f3f7fc]">
      <div className="flex w-1.5 shrink-0 items-center border-r border-[#9c9ca4] bg-[#f1f0f6]">
        <span className="ml-0.5 h-4 w-0.5 bg-[radial-gradient(circle,#9a9aa0_1px,transparent_1px)] bg-[length:2px_3px]" />
      </div>
      <div className="min-w-0 flex-1 overflow-hidden">
        <div className="mb-0.5 mt-0.5 flex h-[27px] items-center border-y border-l border-[#8f9aa6] bg-gradient-to-b from-[#9bb5d1] to-[#bdd3ea] pl-[3px] text-[12px] font-bold text-[#454a52]">De</div>
        <TrayRow open />
        <div className="h-[231px] pl-2.5">
          <p className="flex h-[33px] items-end border-b-2 border-[#dfdfe7] pb-1 text-[12px] font-bold text-[#454a52]">N</p>
        </div>
        <TrayRow />
        <TrayRow />
        <TrayRow />
        <TrayRow open />
        <div className="flex h-[33px] items-center pl-3">
          <svg viewBox="0 0 12 12" className="h-3 w-3 shrink-0" fill="none" stroke="#444" aria-hidden="true"><path d={`${dot(6, 6, 5)}M3 6h6`} /></svg>
        </div>
        <input aria-label="Search components" className="ml-0.5 block h-5 w-full border border-[#dfdfe7] bg-white" />
        <div className="ml-0.5 h-[199px] bg-white" />
        <div className="mb-0.5 mt-3.5 h-1 border border-[#dfdfe7]" />
        <TrayRow />
        <TrayRow />
        <TrayRow />
        <TrayRow />
      </div>
    </aside>
  );
}

export default function App() {
  const menu = ['File', 'Edit', 'View', 'Camera', 'Draw', 'Tools', 'Window', 'Extensions', 'Help'];

  return (
    <div className="relative flex h-screen flex-col overflow-hidden bg-[#f1f0f6] font-['Open_Sans','Noto_Sans',sans-serif] text-[#2b2f36]">
      <header className="flex h-[23px] shrink-0 items-center gap-[5px] bg-white pl-0.5">
        <Glyph
          size={16}
          shapes={[
            ['M2 7l9-5 9 5v11l-8 5', 'none', '#0f6cb3', 2.5],
            ['M2 7l8 5v11M2 12l8 4M2 17l8 4', 'none', '#0f8ad0', 2.2],
            ['M6 6l5-2 6 3v9l-4 3v-9Z', 'none', '#0b5a99', 1.8],
          ]}
        />
        <h1 className="text-[12px] text-black">A KHIEM abf* - SketchUp 2024</h1>
      </header>

      <nav className="flex h-[22px] shrink-0 items-center gap-3.5 pl-2.5 text-[12px]">
        {menu.map((m) => <button key={m} type="button">{m}</button>)}
      </nav>

      <div className="flex h-9 shrink-0 overflow-hidden">
        <Group items={fileTools} className="w-[390px]" />
        <Group items={extTools} />
      </div>

      <div className="flex h-9 shrink-0 overflow-hidden">
        <div className="h-full w-[784px] shrink-0 border-r-2 border-[#e0e0e8]" />
        <Group items={viewTools} className="w-[212px]" />
        <Group items={abfLauncher} className="w-[46px]" />
        <div className="flex h-full shrink-0 items-center gap-1 border-2 border-l-0 border-[#e0e0e8] pl-px pr-1">
          <Grip />
          <label className="relative flex h-[22px] w-[166px] items-center rounded-sm border border-[#b4b4ba] bg-white">
            <svg viewBox="0 0 12 12" className="absolute left-1.5 h-3 w-3" fill="none" stroke="#111" strokeWidth="2" aria-hidden="true"><path d="M1 7l3 3 7-8" /></svg>
            <select aria-label="Tag" className="h-full w-full appearance-none bg-transparent pl-6 text-[12px] outline-none">
              <option>Untagged</option>
            </select>
            <svg viewBox="0 0 8 5" className="absolute right-1.5 h-[5px] w-2" fill="#777" aria-hidden="true"><path d="M0 0h8L4 5Z" /></svg>
          </label>
        </div>
        <Group items={czTools} className="w-[50px]" />
        <Group items={shapeTools} className="w-[110px]" />
        <Group items={fredoTools} className="w-[46px]" />
        <Group items={cornerTools} className="w-[110px]" />
        <Group items={stackTools} />
      </div>

      <div className="flex min-h-0 flex-1">
        <aside className="w-[69px] shrink-0">
          <div className="flex flex-col items-center border-2 border-[#e0e0e8] pb-0.5 pr-px">
            <span className="flex h-[9px] items-center"><Grip vertical={false} /></span>
            {palette.map((section, i) => (
              <React.Fragment key={i}>
                {i > 0 && <span className="my-0.5 h-0.5 w-[52px] bg-[#8f8f94]" />}
                <div className="grid grid-cols-2">
                  {section.map((tool) => <ToolButton key={tool.name} tool={tool} />)}
                </div>
              </React.Fragment>
            ))}
          </div>
        </aside>
        <Viewport />
        <Tray />
      </div>

      <Floating title="ABF" place="left-[109px] top-[100px]" items={abfTools} />
      <Floating title="Keyframe Animation" place="right-[162px] top-[111px]" items={keyframeTools} />
      <Floating
        title="..."
        place="right-[73px] top-[165px]"
        items={[{ name: 'Orbit camera', shapes: [[dot(10, 12, 8), 'none', NAVY, 1.8], ['M3 0l5 3-5 3ZM3 19l5 3-5 3ZM18 9l5 3-5 3Z', NAVY]] }]}
      />
      <Floating
        title="..."
        place="right-[190px] top-[224px]"
        items={[{ name: 'Face', shapes: [['M1 7l14-6 8 22H1Z', '#b9b9bd', '#a4a4a8', 1]] }]}
      />
      <Floating
        title="..."
        place="right-[56px] top-[909px]"
        items={[{ name: 'Solid', shapes: [['M1 1h13v16H1Z', 'none', '#ef5a5c', 1.3], ['M12 20l10-6 2 2-8 6Z', '#555'], ['M8 8l3-2 9 3-1 11-5 3-6-7Z', '#ccb884', '#222', 1.3], ['M8 8l7 4 5-3M15 12l-1 10', 'none', '#222', 1], [dot(5, 9, 1.8), RED], [dot(9, 6, 1.8), RED]] }]}
      />
    </div>
  );
}
